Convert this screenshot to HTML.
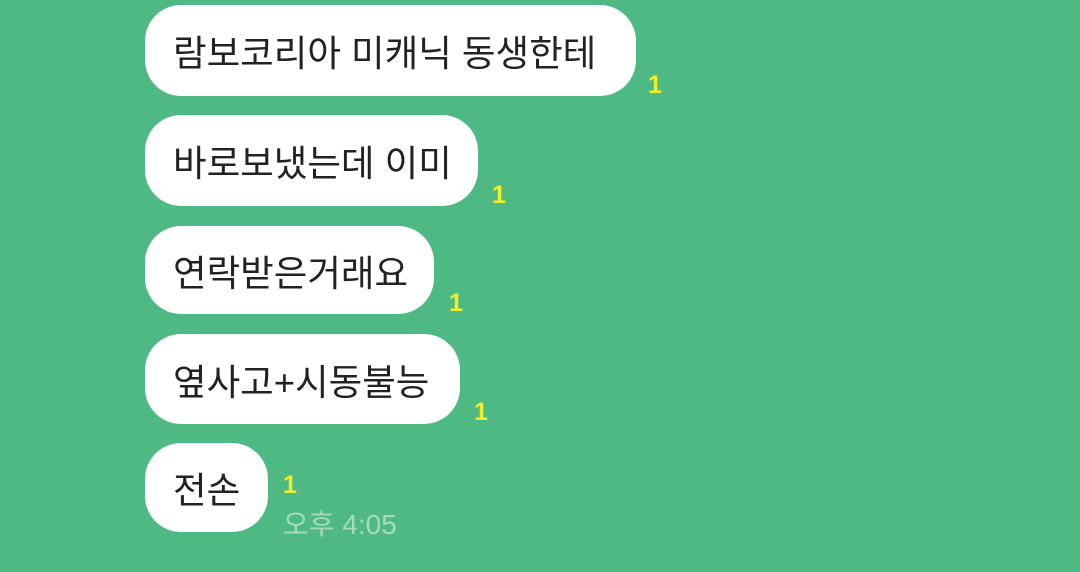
<!DOCTYPE html>
<html><head><meta charset="utf-8"><style>
html,body{margin:0;padding:0;}
body{width:1080px;height:572px;background:#4fb984;position:relative;overflow:hidden;font-family:"Liberation Sans","Noto Sans CJK KR",sans-serif;}
.b{position:absolute;left:145px;background:#fff;border-radius:36px;color:#222;font-size:36.5px;box-sizing:border-box;padding-left:28px;display:flex;align-items:center;white-space:nowrap;}
.n{position:absolute;color:#f0ef2a;font-size:25px;font-weight:bold;}
.t{position:absolute;left:283px;top:503px;color:#a6dcbc;font-size:28px;}
</style></head><body>
<div class="b" style="top:5px;width:491px;height:91px;">람보코리아 미캐닉 동생한테</div>
<div class="n" style="left:648px;top:71px;">1</div>
<div class="b" style="top:115px;width:333px;height:91px;">바로보냈는데 이미</div>
<div class="n" style="left:492px;top:181px;">1</div>
<div class="b" style="top:226px;width:289px;height:88px;">연락받은거래요</div>
<div class="n" style="left:449px;top:289px;">1</div>
<div class="b" style="top:334px;width:315px;height:90px;">옆사고+시동불능</div>
<div class="n" style="left:474px;top:398px;">1</div>
<div class="b" style="top:443px;width:123px;height:89px;">전손</div>
<div class="n" style="left:283px;top:471px;">1</div>
<div class="t">오후 4:05</div>
</body></html>
